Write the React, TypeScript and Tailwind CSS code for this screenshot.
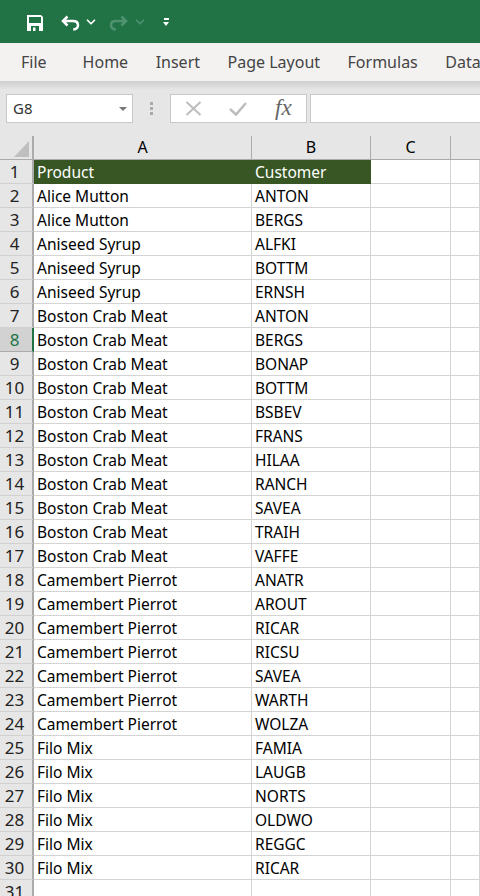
import { ChevronDown } from "lucide-react";

const rows: [string, string][] = [
  ["Alice Mutton", "ANTON"],
  ["Alice Mutton", "BERGS"],
  ["Aniseed Syrup", "ALFKI"],
  ["Aniseed Syrup", "BOTTM"],
  ["Aniseed Syrup", "ERNSH"],
  ["Boston Crab Meat", "ANTON"],
  ["Boston Crab Meat", "BERGS"],
  ["Boston Crab Meat", "BONAP"],
  ["Boston Crab Meat", "BOTTM"],
  ["Boston Crab Meat", "BSBEV"],
  ["Boston Crab Meat", "FRANS"],
  ["Boston Crab Meat", "HILAA"],
  ["Boston Crab Meat", "RANCH"],
  ["Boston Crab Meat", "SAVEA"],
  ["Boston Crab Meat", "TRAIH"],
  ["Boston Crab Meat", "VAFFE"],
  ["Camembert Pierrot", "ANATR"],
  ["Camembert Pierrot", "AROUT"],
  ["Camembert Pierrot", "RICAR"],
  ["Camembert Pierrot", "RICSU"],
  ["Camembert Pierrot", "SAVEA"],
  ["Camembert Pierrot", "WARTH"],
  ["Camembert Pierrot", "WOLZA"],
  ["Filo Mix", "FAMIA"],
  ["Filo Mix", "LAUGB"],
  ["Filo Mix", "NORTS"],
  ["Filo Mix", "OLDWO"],
  ["Filo Mix", "REGGC"],
  ["Filo Mix", "RICAR"],
];

const tabs = ["Home", "Insert", "Page Layout", "Formulas", "Data"];

function Cell({ children, header }: { children?: string; header?: boolean }) {
  return (
    <div
      className={`h-6 shrink-0 border-b border-r pl-[3px] pt-px text-[15.5px] leading-[22px] whitespace-nowrap overflow-hidden ${
        header ? "border-[#375623] bg-[#375623] text-white" : "border-[#d4d4d4] bg-white text-black"
      }`}
    >
      {children}
    </div>
  );
}

function Row({ n, a, b, header, selected }: { n: number; a?: string; b?: string; header?: boolean; selected?: boolean }) {
  return (
    <div className="grid h-6 grid-cols-[34px_218px_119px_80px_29px]">
      <div
        className={`h-6 border-b border-r-2 text-center text-[17px] leading-[23px] pr-[3px] ${
          selected
            ? "border-b-[#ababab] border-r-[#217346] bg-[#d2d2d2] text-[#217346]"
            : "border-b-[#d0d0d0] border-r-[#ababab] bg-[#e6e6e6] text-[#222]"
        }`}
      >
        {n}
      </div>
      <Cell header={header}>{a}</Cell>
      <Cell header={header}>{b}</Cell>
      <Cell />
      <Cell />
    </div>
  );
}

function SaveIcon() {
  return (
    <svg width="16" height="16" viewBox="0 0 16 16" fill="none">
      <path
        fillRule="evenodd"
        clipRule="evenodd"
        d="M0 0h14l2 2v14H0V0Zm2 2v6h12V2H2Zm2 9v5h8v-5H4Zm2 1.5h2.5V16H6v-3.5Z"
        fill="#fff"
      />
    </svg>
  );
}

function UndoIcon({ color }: { color: string }) {
  return (
    <svg width="19" height="16" viewBox="0 0 19 16" fill="none">
      <path d="M6.5 1.5 2 6l4.5 4.5M2.5 6H12c3 0 5 1.7 5 4.2 0 2.4-1.7 4-4.8 4.3" stroke={color} strokeWidth="2.5" />
    </svg>
  );
}

export default function App() {
  return (
    <div className="flex h-[896px] w-[480px] flex-col overflow-hidden bg-[#e6e6e6] font-['Noto_Sans',sans-serif]">
      <div className="flex h-[43px] shrink-0 items-center bg-[#217346] pl-[27px] pt-[3px]">
        <SaveIcon />
        <div className="ml-[18px]"><UndoIcon color="#fff" /></div>
        <ChevronDown className="ml-[4px] -mt-[3px] h-[14px] w-[14px] text-white" strokeWidth={3} />
        <div className="ml-[11px] -scale-x-100"><UndoIcon color="#4f9270" /></div>
        <ChevronDown className="ml-[5px] -mt-[3px] h-[14px] w-[14px] text-[#4f9270]" strokeWidth={3} />
        <div className="ml-[16px] -mt-[3px] flex flex-col items-center gap-[2px]">
          <div className="h-[2px] w-[5px] bg-white" />
          <div className="h-0 w-0 border-x-[3.5px] border-t-[4px] border-x-transparent border-t-white" />
        </div>
      </div>

      <div className="flex h-[38px] shrink-0 items-center gap-[27.5px] whitespace-nowrap bg-[#f3f2f1] pl-[21px] text-[16px] text-[#444]">
        <span className="mr-[8.5px]">File</span>
        {tabs.map((t) => (
          <span key={t}>{t}</span>
        ))}
      </div>
      <div className="h-[9px] shrink-0 bg-gradient-to-b from-[#cfcfcf] to-[#e6e6e6]" />

      <div className="mt-1 flex h-[29px] shrink-0 items-stretch pl-[6px]">
        <div className="flex w-[127px] items-center justify-between border border-[#c8c8c8] bg-white pl-[6px] pr-[5px] text-[15px] text-[#333]">
          <span>G8</span>
          <div className="h-0 w-0 border-x-[4px] border-t-[4px] border-x-transparent border-t-[#777]" />
        </div>
        <div className="ml-[17px] flex flex-col justify-center gap-[2px]">
          <div className="h-[3px] w-[3px] bg-[#aaa]" />
          <div className="h-[3px] w-[3px] bg-[#aaa]" />
          <div className="h-[3px] w-[3px] bg-[#aaa]" />
        </div>
        <div className="ml-[17px] flex w-[137px] items-center border border-[#c8c8c8] bg-white">
          <svg className="ml-[14px]" width="17" height="15" viewBox="0 0 17 15" fill="none">
            <path d="M1.5 1l14 13M15.5 1l-14 13" stroke="#bdbdbd" strokeWidth="2" />
          </svg>
          <svg className="ml-[27px]" width="18" height="15" viewBox="0 0 18 15" fill="none">
            <path d="M1 8l6 5.5L17 2" stroke="#bdbdbd" strokeWidth="2.6" />
          </svg>
          <span className="ml-[28px] -mt-[2px] font-['Liberation_Serif',serif] text-[23px] italic leading-none text-[#666]">fx</span>
        </div>
        <div className="ml-[3px] flex-1 border border-r-0 border-[#c8c8c8] bg-white" />
      </div>

      <div className="mt-[13px] grid h-[24px] shrink-0 grid-cols-[34px_218px_119px_80px_29px] border-b border-[#ababab] text-center text-[16px] leading-[23px] text-black">
        <div className="relative border-r-2 border-[#ababab]">
          <div className="absolute bottom-[2px] right-[3px] h-0 w-0 border-b-[16px] border-l-[15px] border-b-[#bfbfbf] border-l-transparent" />
        </div>
        <div className="border-r border-[#ababab]">A</div>
        <div className="border-r border-[#ababab]">B</div>
        <div className="border-r border-[#ababab]">C</div>
        <div />
      </div>

      <Row n={1} a="Product" b="Customer" header />
      {rows.map(([a, b], i) => (
        <Row key={i} n={i + 2} a={a} b={b} selected={i + 2 === 8} />
      ))}
      <Row n={31} />
    </div>
  );
}
